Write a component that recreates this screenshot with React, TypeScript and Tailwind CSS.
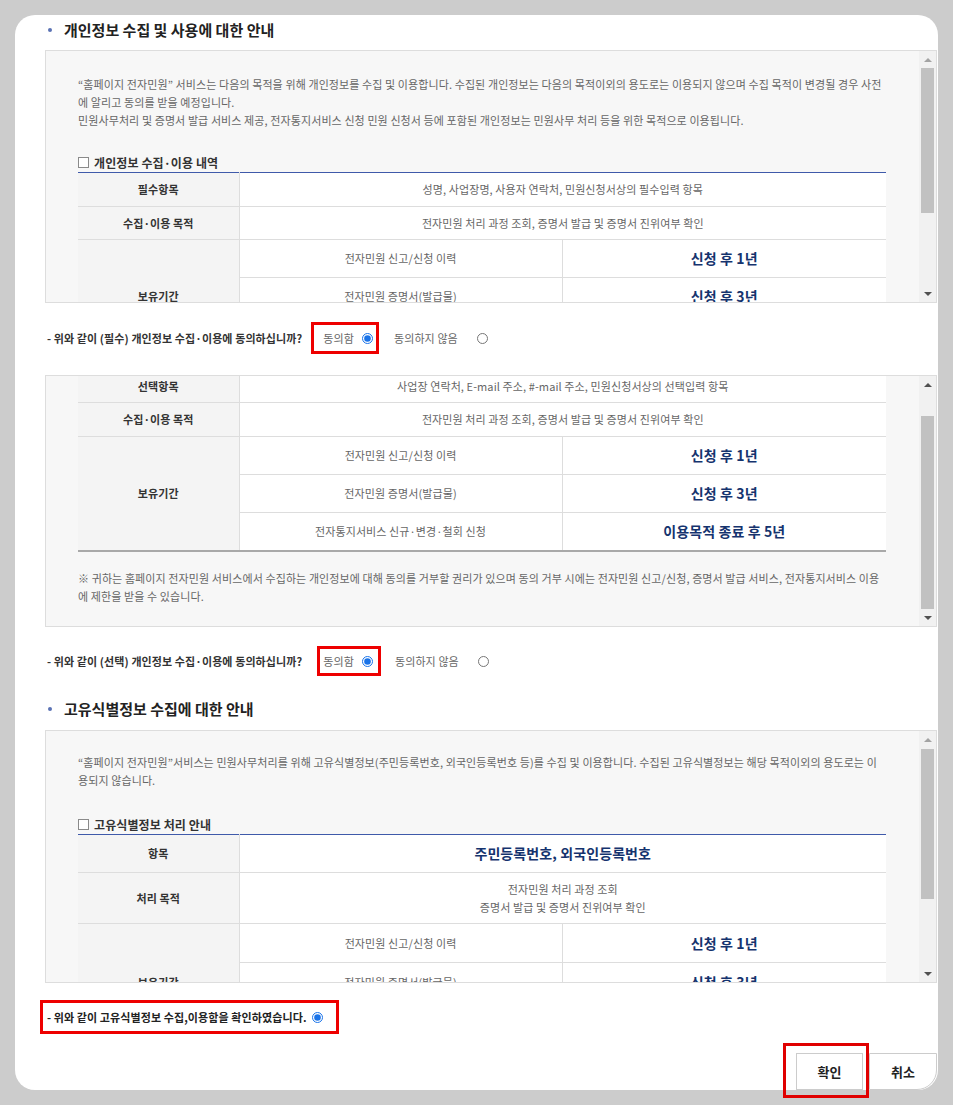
import React, { useEffect, useRef } from 'react';

const thCls =
  'w-[161px] bg-[#f4f4f4] border-b border-r border-[#dddddd] text-[11px] font-bold text-[#333] text-center align-middle';
const tdCls = 'border-b border-[#dddddd] bg-white text-[11px] text-[#666] text-center align-middle';
const tdSplitCls = 'w-[323px] border-b border-r border-[#dddddd] bg-white text-[11px] text-[#666] text-center align-middle';
const blueCls = 'border-b border-[#dddddd] bg-white text-[14px] font-bold text-[#15336e] text-center align-middle';

const SectionTitle: React.FC<{ children: React.ReactNode; className?: string }> = ({ children, className }) => (
  <div className={`h-[30px] flex items-center pl-[3px] ${className || ''}`}>
    <span className="w-[4px] h-[4px] rounded-full bg-[#5a72b4]" />
    <h2 className="ml-[12px] text-[15px] font-bold text-[#222] tracking-[0]">{children}</h2>
  </div>
);

const CheckHead: React.FC<{ children: React.ReactNode; className?: string }> = ({ children, className }) => (
  <div className={`flex items-center h-[15px] text-[12px] font-bold text-[#333] ${className || ''}`}>
    <span className="w-[11px] h-[11px] border border-[#8a8a8a] bg-white mr-[5px]" />
    <span>{children}</span>
  </div>
);

const Radio: React.FC<{ name: string; checked?: boolean }> = ({ name, checked }) => (
  <input
    type="radio"
    name={name}
    defaultChecked={checked}
    className="w-[11px] h-[11px] m-0 accent-[#1a73e8]"
  />
);

// 스크롤바 (thumb 위치/크기는 박스마다 다름)
const ScrollBar: React.FC<{ thumbTop: number; thumbH: number; upActive?: boolean }> = ({
  thumbTop,
  thumbH,
  upActive,
}) => (
  <div className="w-[17px] shrink-0 bg-[#f1f1f1] flex flex-col">
    <div className="h-[17px] flex items-center justify-center">
      <span
        className={`w-0 h-0 border-x-[4px] border-x-transparent border-b-[4px] ${
          upActive ? 'border-b-[#505050]' : 'border-b-[#a3a3a3]'
        }`}
      />
    </div>
    <div className="flex-1 px-[2px]">
      <div className="bg-[#c1c1c1]" style={{ marginTop: thumbTop, height: thumbH }} />
    </div>
    <div className="h-[17px] flex items-center justify-center">
      <span className="w-0 h-0 border-x-[4px] border-x-transparent border-t-[4px] border-t-[#505050]" />
    </div>
  </div>
);

// 보유기간 하위 행
const retention = [
  { label: '전자민원 신고/신청 이력', period: '신청 후 1년' },
  { label: '전자민원 증명서(발급물)', period: '신청 후 3년' },
  { label: '전자통지서비스 신규·변경·철회 신청', period: '이용목적 종료 후 5년' },
];

const RetentionRows: React.FC<{ rowH: string; last?: boolean }> = ({ rowH, last }) => (
  <>
    {retention.map((r, i) => (
      <tr key={r.label} className={rowH}>
        {i === 0 && (
          <th rowSpan={3} className={`${thCls} ${last ? 'border-b-2 border-b-[#a9a9a9]' : ''}`}>
            보유기간
          </th>
        )}
        <td className={`${tdSplitCls} ${last && i === 2 ? 'border-b-2 border-b-[#a9a9a9]' : ''}`}>{r.label}</td>
        <td className={`${blueCls} ${last && i === 2 ? 'border-b-2 border-b-[#a9a9a9]' : ''}`}>{r.period}</td>
      </tr>
    ))}
  </>
);

const Note: React.FC<{ className?: string }> = ({ className }) => (
  <p className={`text-[11px] leading-[18px] text-[#666] ${className || ''}`}>
    <span className="block whitespace-nowrap">
      ※ 귀하는 홈페이지 전자민원 서비스에서 수집하는 개인정보에 대해 동의를 거부할 권리가 있으며 동의 거부 시에는 전자민원 신고/신청, 증명서 발급 서비스, 전자통지서비스 이용
    </span>
    <span className="block whitespace-nowrap">에 제한을 받을 수 있습니다.</span>
  </p>
);

const App: React.FC = () => {
  const box2Ref = useRef<HTMLDivElement>(null);
  const rowRef = useRef<HTMLTableRowElement>(null);

  useEffect(() => {
    const box = box2Ref.current;
    const row = rowRef.current;
    if (!box || !row) return;
    const b = box.getBoundingClientRect();
    const r = row.getBoundingClientRect();
    box.scrollTop = r.top - b.top + 6;
  }, []);

  return (
    <div className="w-[953px] h-[1105px] bg-[#cccccc] pt-[15px] pl-[15px] overflow-hidden font-['Noto_Sans_CJK_KR','Noto_Sans',sans-serif] tracking-[0.1px]">
      <div className="w-[923px] h-[1075px] bg-white rounded-[20px] flex flex-col pl-[30px] pr-[1px]">
        <SectionTitle>개인정보 수집 및 사용에 대한 안내</SectionTitle>

        {/* 필수 */}
        <div className="mt-[5px] h-[253px] shrink-0 border border-[#dddddd] bg-[#f7f7f7] flex">
          <div className="flex-1 overflow-hidden">
            <div className="pl-[32px] pr-[33px] pt-[24px] pb-[24px]">
              <p className="text-[11px] leading-[18px] text-[#666]">
                <span className="block whitespace-nowrap">
                  “홈페이지 전자민원” 서비스는 다음의 목적을 위해 개인정보를 수집 및 이용합니다. 수집된 개인정보는 다음의 목적이외의 용도로는 이용되지 않으며 수집 목적이 변경될 경우 사전
                </span>
                <span className="block whitespace-nowrap">에 알리고 동의를 받을 예정입니다.</span>
                <span className="block whitespace-nowrap">
                  민원사무처리 및 증명서 발급 서비스 제공, 전자통지서비스 신청 민원 신청서 등에 포함된 개인정보는 민원사무 처리 등을 위한 목적으로 이용됩니다.
                </span>
              </p>
              <CheckHead className="mt-[26px] mb-[2px]">개인정보 수집·이용 내역</CheckHead>
              <table className="w-full border-collapse border-t border-t-[#3f5aaa]">
                <tbody>
                  <tr className="h-[34px]">
                    <th className={thCls}>필수항목</th>
                    <td colSpan={2} className={tdCls}>
                      성명, 사업장명, 사용자 연락처, 민원신청서상의 필수입력 항목
                    </td>
                  </tr>
                  <tr className="h-[33px]">
                    <th className={thCls}>수집·이용 목적</th>
                    <td colSpan={2} className={tdCls}>
                      전자민원 처리 과정 조회, 증명서 발급 및 증명서 진위여부 확인
                    </td>
                  </tr>
                  <RetentionRows rowH="h-[38px]" last />
                </tbody>
              </table>
              <Note className="mt-[18px]" />
            </div>
          </div>
          <ScrollBar thumbTop={0} thumbH={145} />
        </div>

        <div className="mt-[19px] h-[32px] shrink-0 flex items-center pl-[2px] text-[11px]">
          <span className="font-bold text-[#333]">- 위와 같이 (필수) 개인정보 수집·이용에 동의하십니까?</span>
          <label className="ml-[9px] h-[32px] border-[3px] border-[#ee0000] flex items-center pl-[9px] pr-[3px] gap-[8px] text-[#666]">
            동의함 <Radio name="req" checked />
          </label>
          <label className="ml-[15px] flex items-center gap-[19px] text-[#666]">
            동의하지 않음 <Radio name="req" />
          </label>
        </div>

        {/* 선택 */}
        <div className="mt-[21px] h-[252px] shrink-0 border border-[#dddddd] bg-[#f7f7f7] flex">
          <div ref={box2Ref} className="flex-1 overflow-hidden">
            <div className="pl-[32px] pr-[33px] pt-[24px] pb-[22px]">
              <table className="w-full border-collapse border-t border-t-[#3f5aaa]">
                <tbody>
                  <tr ref={rowRef} className="h-[33px]">
                    <th className={thCls}>선택항목</th>
                    <td colSpan={2} className={tdCls}>
                      사업장 연락처, E-mail 주소, #-mail 주소, 민원신청서상의 선택입력 항목
                    </td>
                  </tr>
                  <tr className="h-[34px]">
                    <th className={thCls}>수집·이용 목적</th>
                    <td colSpan={2} className={tdCls}>
                      전자민원 처리 과정 조회, 증명서 발급 및 증명서 진위여부 확인
                    </td>
                  </tr>
                  <RetentionRows rowH="h-[38px]" last />
                </tbody>
              </table>
              <Note className="mt-[17px]" />
            </div>
          </div>
          <ScrollBar thumbTop={23} thumbH={193} upActive />
        </div>

        <div className="mt-[19px] h-[30px] shrink-0 flex items-center pl-[2px] text-[11px]">
          <span className="font-bold text-[#333]">- 위와 같이 (선택) 개인정보 수집·이용에 동의하십니까?</span>
          <label className="ml-[15px] h-[30px] border-[3px] border-[#ee0000] flex items-center pl-[3px] pr-[5px] gap-[8px] text-[#666]">
            동의함 <Radio name="opt" checked />
          </label>
          <label className="ml-[14px] flex items-center gap-[19px] text-[#666]">
            동의하지 않음 <Radio name="opt" />
          </label>
        </div>

        <SectionTitle className="mt-[18px]">고유식별정보 수집에 대한 안내</SectionTitle>

        {/* 고유식별정보 */}
        <div className="mt-[6px] h-[253px] shrink-0 border border-[#dddddd] bg-[#f7f7f7] flex">
          <div className="flex-1 overflow-hidden">
            <div className="pl-[32px] pr-[33px] pt-[22px] pb-[56px]">
              <p className="text-[11px] leading-[18px] text-[#666]">
                <span className="block whitespace-nowrap">
                  “홈페이지 전자민원”서비스는 민원사무처리를 위해 고유식별정보(주민등록번호, 외국인등록번호 등)를 수집 및 이용합니다. 수집된 고유식별정보는 해당 목적이외의 용도로는 이
                </span>
                <span className="block whitespace-nowrap">용되지 않습니다.</span>
              </p>
              <CheckHead className="mt-[28px] mb-[2px]">고유식별정보 처리 안내</CheckHead>
              <table className="w-full border-collapse border-t border-t-[#3f5aaa]">
                <tbody>
                  <tr className="h-[38px]">
                    <th className={thCls}>항목</th>
                    <td colSpan={2} className={blueCls}>
                      주민등록번호, 외국인등록번호
                    </td>
                  </tr>
                  <tr className="h-[51px]">
                    <th className={thCls}>처리 목적</th>
                    <td colSpan={2} className={`${tdCls} leading-[18px]`}>
                      전자민원 처리 과정 조회
                      <br />
                      증명서 발급 및 증명서 진위여부 확인
                    </td>
                  </tr>
                  <RetentionRows rowH="h-[39px]" />
                </tbody>
              </table>
            </div>
          </div>
          <ScrollBar thumbTop={1} thumbH={150} />
        </div>

        <div className="mt-[17px] -ml-[5px] self-start h-[34px] shrink-0 border-[3px] border-[#ee0000] flex items-center pl-[4px] pr-[13px] gap-[5px] text-[11px]">
          <span className="font-bold text-[#222]">- 위와 같이 고유식별정보 수집,이용함을 확인하였습니다.</span>
          <Radio name="uid" checked />
        </div>

        <div className="mt-auto flex justify-end">
          <div className="relative">
            <button className="w-[67px] h-[37px] border border-[#cccccc] bg-white text-[13px] font-bold text-[#222]">
              확인
            </button>
            <div className="absolute -left-[13px] -top-[10px] w-[86px] h-[55px] border-[3px] border-[#e00000] pointer-events-none" />
          </div>
          <button className="ml-[6px] w-[68px] h-[37px] border border-[#cccccc] bg-white rounded-br-[20px] text-[13px] font-bold text-[#222]">
            취소
          </button>
        </div>
      </div>
    </div>
  );
};

export default App;
